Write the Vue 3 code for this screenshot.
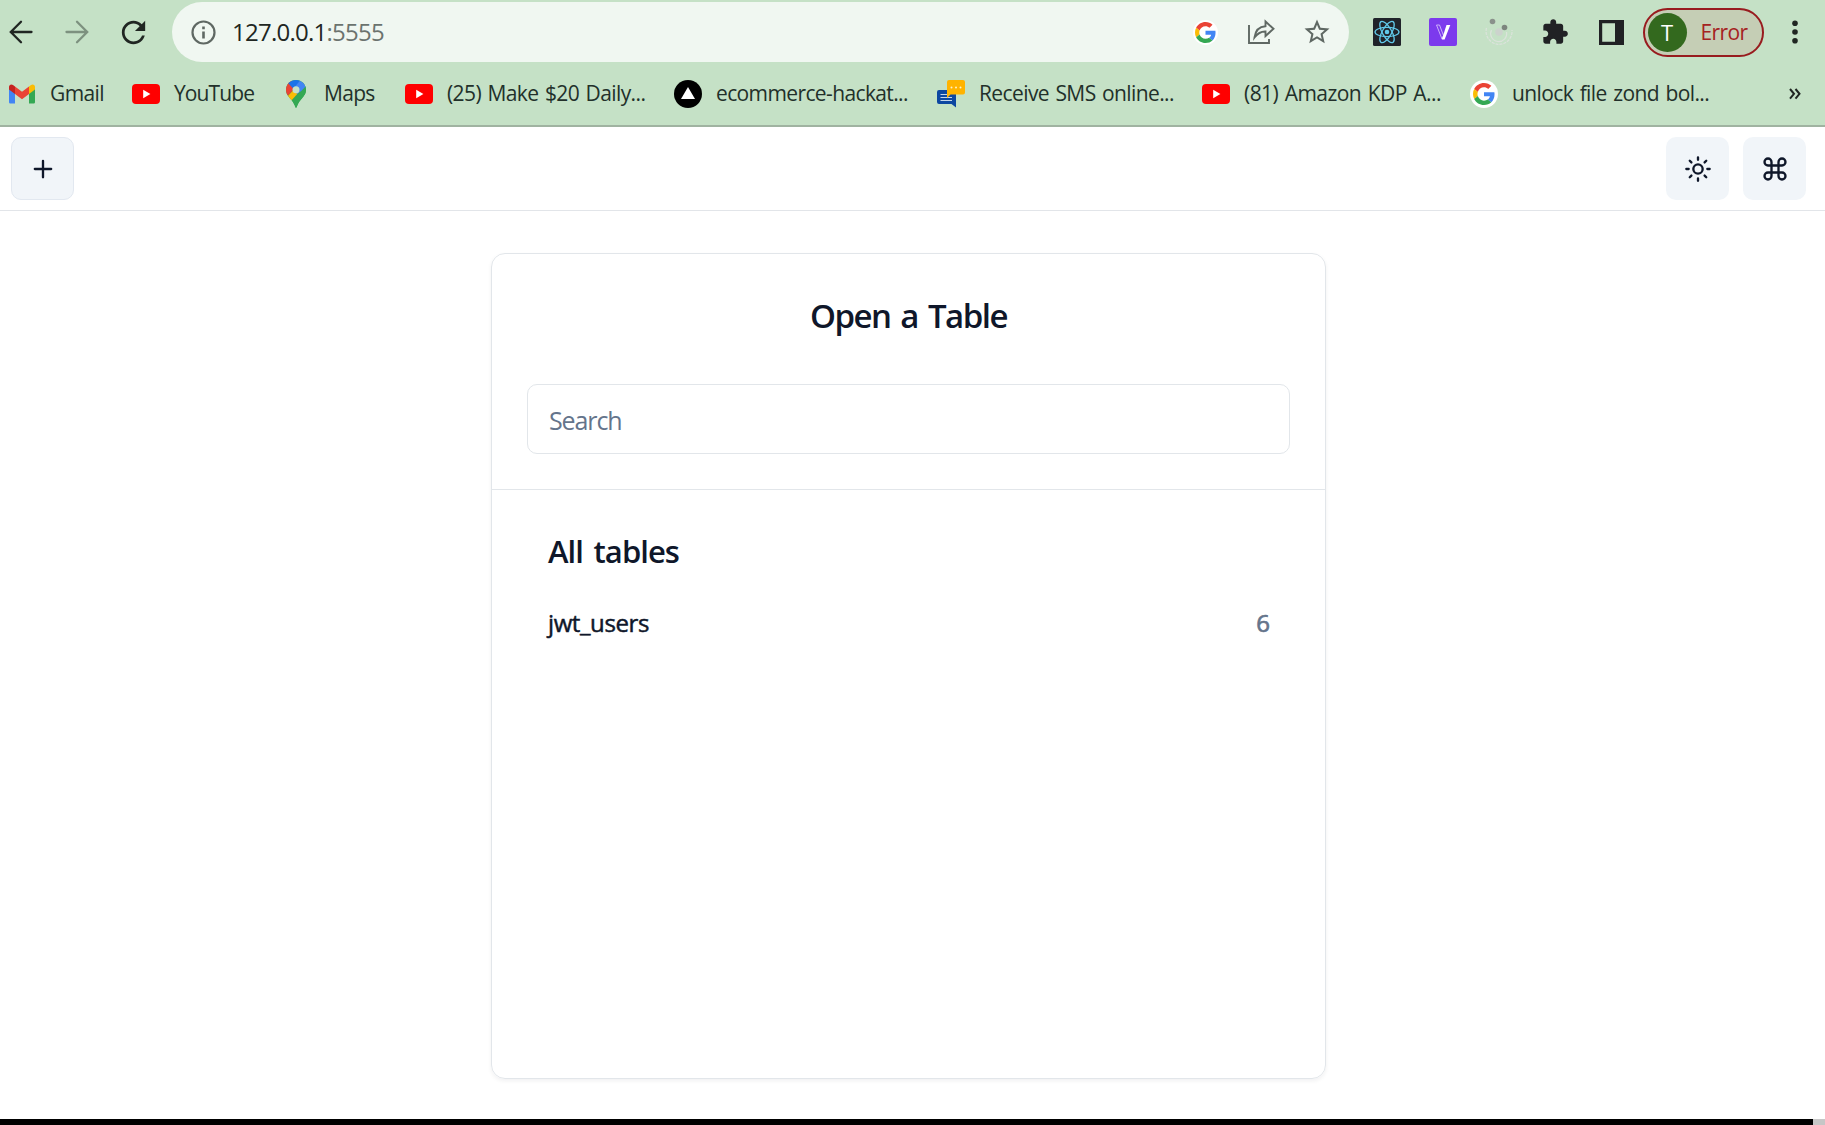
<script setup>
const bookmarks = [
  { icon: 'gmail', label: 'Gmail', spacing: -0.6 },
  { icon: 'youtube', label: 'YouTube', spacing: -0.9 },
  { icon: 'maps', label: 'Maps', spacing: -0.7 },
  { icon: 'youtube', label: '(25) Make $20 Daily...', spacing: -0.6 },
  { icon: 'vercel', label: 'ecommerce-hackat...', spacing: -0.62 },
  { icon: 'sms', label: 'Receive SMS online...', spacing: -0.6 },
  { icon: 'youtube', label: '(81) Amazon KDP A...', spacing: -0.55 },
  { icon: 'google', label: 'unlock file zond bol...', spacing: -0.6 },
]
const tables = [{ name: 'jwt_users', count: 6 }]
</script>

<template>
  <div class="screen">
    <svg class="defs" width="0" height="0">
      <symbol id="google" viewBox="0 0 48 48">
        <path fill="#EA4335" d="M24 9.5c3.54 0 6.71 1.22 9.21 3.6l6.85-6.85C35.9 2.38 30.47 0 24 0 14.62 0 6.51 5.38 2.56 13.22l7.98 6.19C12.43 13.72 17.74 9.5 24 9.5z" />
        <path fill="#4285F4" d="M46.98 24.55c0-1.57-.15-3.09-.38-4.55H24v9.02h12.94c-.58 2.96-2.26 5.48-4.78 7.18l7.73 6c4.51-4.18 7.09-10.36 7.09-17.65z" />
        <path fill="#FBBC05" d="M10.53 28.59c-.48-1.45-.76-2.99-.76-4.59s.27-3.14.76-4.59l-7.98-6.19C.92 16.46 0 20.12 0 24s.92 7.54 2.56 10.78l7.97-6.19z" />
        <path fill="#34A853" d="M24 48c6.48 0 11.93-2.13 15.89-5.81l-7.73-6c-2.15 1.45-4.92 2.3-8.16 2.3-6.26 0-11.57-4.22-13.47-9.91l-7.98 6.19C6.51 42.62 14.62 48 24 48z" />
      </symbol>
    </svg>

    <header class="chrome">
      <div class="toolbar">
        <div class="nav">
          <span class="slot">
            <svg width="24" height="24" viewBox="0 0 24 24" fill="none" stroke="#202622" stroke-width="2.3" stroke-linecap="round"><path d="M22.5 12H2M12 1.800L1.800 12L12 22.200" /></svg>
          </span>
          <span class="slot">
            <svg width="24" height="24" viewBox="0 0 24 24" fill="none" stroke="#7d917f" stroke-width="2.3" stroke-linecap="round"><path d="M1.500 12H22M12 1.800L22.200 12L12 22.200" /></svg>
          </span>
          <span class="slot">
            <svg width="35" height="35" viewBox="0 0 24 24" fill="#202622"><path d="M17.65 6.35C16.2 4.9 14.21 4 12 4c-4.42 0-7.99 3.58-7.99 8s3.57 8 7.99 8c3.73 0 6.84-2.55 7.73-6h-1.9c-.82 2.33-3.04 4.1-5.83 4.1-3.31 0-6.1-2.79-6.1-6.1s2.79-6.1 6.1-6.1c1.66 0 3.14.69 4.22 1.78L13 11h7V4l-2.35 2.35z" /></svg>
          </span>
        </div>
        <div class="address">
          <svg class="info" width="25" height="25" viewBox="0 0 25 25" fill="none" stroke="#5f6863" stroke-width="2.2"><circle cx="12.500" cy="12.500" r="11" /><path d="M12.500 11.500V18.500M12.500 6.500V9.300" stroke-width="2.600" /></svg>
          <div class="url">127.0.0.1<span>:5555</span></div>
          <div class="actions">
            <span class="slot"><i class="disc small"><svg width="21" height="21"><use href="#google" /></svg></i></span>
            <span class="slot">
              <svg width="28" height="28" viewBox="0 0 28 28" fill="none" stroke="#5f6863" stroke-width="1.900"><path d="M2 7V25H22V21" /><path d="M7.500 19.500C8.500 12 12.500 8.500 18.500 8.200V3.500L26.500 10.800L18.500 18V13.500C13.500 13.300 10.500 15.500 7.500 19.500Z" /></svg>
            </span>
            <span class="slot">
              <svg width="30" height="30" viewBox="0 0 24 24" fill="#5f6863"><path d="M22 9.240l-7.190-.62L12 2 9.190 8.630 2 9.240l5.460 4.730L5.820 21 12 17.270 18.180 21l-1.630-7.030L22 9.240zM12 15.400l-3.760 2.270 1-4.280-3.320-2.880 4.380-.38L12 6.100l1.710 4.040 4.380.38-3.320 2.880 1 4.280L12 15.400z" /></svg>
            </span>
          </div>
        </div>
        <div class="extensions">
          <span class="slot">
            <svg width="28" height="28" viewBox="0 0 28 28"><rect width="28" height="28" rx="1.500" fill="#20232a" /><g fill="none" stroke="#61c9ea" stroke-width="1.300"><ellipse cx="14" cy="14" rx="12" ry="4.600" /><ellipse cx="14" cy="14" rx="12" ry="4.600" transform="rotate(60 14 14)" /><ellipse cx="14" cy="14" rx="12" ry="4.600" transform="rotate(120 14 14)" /></g><circle cx="14" cy="14" r="2.300" fill="#61c9ea" /></svg>
          </span>
          <span class="slot">
            <svg width="28" height="28" viewBox="0 0 28 28"><rect width="28" height="28" rx="2" fill="#7c3aed" /><path fill="none" stroke="#d3bdfa" stroke-width=".9" d="M7.500 7H10.500L14.500 17.500L13 21Z" /><path d="M17.500 7H21.300L15.600 21.500H12.800Z" fill="#fff" /></svg>
          </span>
          <span class="slot">
            <svg width="30" height="30" viewBox="0 0 30 30" fill="none"><g stroke="#dbe3db" stroke-width="1.200"><path d="M2.500 11A13 13 0 1 0 28 13" stroke-dasharray="3 1" /><path d="M7.500 13A8 8 0 1 0 22.500 15" /></g><circle cx="15" cy="15" r="3.800" fill="#ccd3cd" /><circle cx="8.500" cy="4.500" r="2.800" fill="#8a918b" /><circle cx="20.500" cy="10.500" r="2.800" fill="#7d857e" /></svg>
          </span>
          <span class="slot">
            <svg width="28" height="28" viewBox="0 0 24 24" fill="#202124"><path d="M20.500 11H19V7c0-1.100-.9-2-2-2h-4V3.500C13 2.120 11.880 1 10.500 1S8 2.120 8 3.500V5H4c-1.100 0-1.990.9-1.990 2v3.800H3.500c1.490 0 2.700 1.210 2.700 2.700s-1.210 2.700-2.700 2.700H2V20c0 1.100.9 2 2 2h3.800v-1.500c0-1.490 1.210-2.700 2.700-2.700 1.490 0 2.700 1.210 2.700 2.700V22H17c1.100 0 2-.9 2-2v-4h1.500c1.380 0 2.500-1.120 2.500-2.500S21.880 11 20.500 11z" /></svg>
          </span>
          <span class="slot">
            <svg width="25" height="25" viewBox="0 0 25 25"><path fill="#202124" fill-rule="evenodd" d="M0 0H25V25H0ZM3.200 3.200V21.800H16V3.200Z" /></svg>
          </span>
        </div>
        <div class="profile"><span class="avatar">T</span><span class="error">Error</span></div>
        <svg class="menu" width="6" height="24" viewBox="0 0 6 24" fill="#202622"><circle cx="3" cy="3.200" r="2.800" /><circle cx="3" cy="12" r="2.800" /><circle cx="3" cy="20.800" r="2.800" /></svg>
      </div>

      <nav class="bookmarks">
        <div v-for="b in bookmarks" :key="b.label" class="bookmark">
          <span class="favicon">
            <svg v-if="b.icon === 'gmail'" width="26" height="20" viewBox="0 0 26 20"><path fill="#4285f4" d="M0 3V18C0 19 .7 19.600 1.600 19.600H6V8.500Z" /><path fill="#34a853" d="M26 3V18C26 19 25.300 19.600 24.400 19.600H20V8.500Z" /><path fill="#fbbc04" d="M20 2.500L22 1C24 -.3 26 1 26 3V5.500L20 10Z" /><path fill="#c5221f" d="M6 2.500L4 1C2 -.3 0 1 0 3V5.500L6 10Z" /><path fill="#ea4335" d="M6 2.500L13 7.700L20 2.500V10L13 15.200L6 10Z" /></svg>
            <svg v-else-if="b.icon === 'youtube'" width="28" height="20" viewBox="0 0 28 20"><rect width="28" height="20" rx="4" fill="#f00" /><path fill="#fff" d="M11.200 5.700V14.300L18.400 10Z" /></svg>
            <svg v-else-if="b.icon === 'maps'" width="20" height="28" viewBox="0 0 20 28"><clipPath id="pin"><path d="M10 0C4.300 0 0 4.300 0 9.700C0 14 2.500 16.300 5 19.500C7.500 22.500 8.500 24.500 9.200 27C9.500 28.200 10.500 28.200 10.800 27C11.500 24.500 12.500 22.500 15 19.500C17.500 16.300 20 14 20 9.700C20 4.300 15.700 0 10 0Z" /></clipPath><g clip-path="url(#pin)"><path fill="#34a853" d="M0 0H20V28H0Z" /><path fill="#fbbc04" d="M0 18L13 4L14 11L4 22L0 20Z" /><path fill="#ea4335" d="M0 0H6L9 8L1.500 16L0 14Z" /><path fill="#1a73e8" d="M2 3L8 9.500L14 1V0H4Z" /><path fill="#4285f4" d="M7.500 8.500L14.500 0L20 5V8L11 14Z" /><path fill="#34a853" d="M20 6L5 22L12 28H20Z" /></g><circle cx="10" cy="9.700" r="3.500" fill="#c5e1c6" /></svg>
            <svg v-else-if="b.icon === 'vercel'" width="28" height="28" viewBox="0 0 28 28"><circle cx="14" cy="14" r="14" /><path fill="#fff" d="M14 7L21 19H7Z" /></svg>
            <svg v-else-if="b.icon === 'sms'" width="28" height="28" viewBox="0 0 28 28"><path fill="#0d47a1" d="M2 10H19V27.500L14.500 24H2Q0 24 0 22V12Q0 10 2 10Z" /><path d="M3.500 14.500H11M3.500 17.500H15M3.500 20.500H15" stroke="#c5d4ea" stroke-width="1.100" /><path fill="#ffb300" d="M12 0H26Q28 0 28 2V12.500Q28 14.500 26 14.500H13.500L10 18V2Q10 0 12 0Z" /><g fill="#fff0c8"><circle cx="14.500" cy="7.500" r="1" /><circle cx="19" cy="7.500" r="1" /><circle cx="23.500" cy="7.500" r="1" /></g></svg>
            <i v-else class="disc"><svg width="22" height="22"><use href="#google" /></svg></i>
          </span>
          <span class="label" :style="{ letterSpacing: b.spacing + 'px' }">{{ b.label }}</span>
        </div>
        <svg class="more" width="12" height="12" viewBox="0 0 12 12" fill="none" stroke="#202622" stroke-width="2"><path d="M1 1L5 5.800L1 10.600M6.500 1L10.500 5.800L6.500 10.600" /></svg>
      </nav>
    </header>

    <div class="tabs">
      <button class="tool outlined">
        <svg width="28" height="28" viewBox="0 0 24 24"><path d="M5 12h14M12 5v14" /></svg>
      </button>
      <div class="tools">
        <button class="tool">
          <svg width="28" height="28" viewBox="0 0 24 24"><circle cx="12" cy="12" r="4" /><path d="M12 2v2M12 20v2M4.930 4.930l1.410 1.410M17.660 17.660l1.410 1.410M2 12h2M20 12h2M6.340 17.660l-1.410 1.410M19.070 4.930l-1.410 1.410" /></svg>
        </button>
        <button class="tool">
          <svg width="28" height="28" viewBox="0 0 24 24"><path d="M18 3a3 3 0 0 0-3 3v12a3 3 0 0 0 3 3 3 3 0 0 0 3-3 3 3 0 0 0-3-3H6a3 3 0 0 0-3 3 3 3 0 0 0 3 3 3 3 0 0 0 3-3V6a3 3 0 0 0-3-3 3 3 0 0 0-3 3 3 3 0 0 0 3 3h12a3 3 0 0 0 3-3 3 3 0 0 0-3-3z" /></svg>
        </button>
      </div>
    </div>

    <main class="content">
      <section class="card">
        <div class="card-head">
          <h1>Open a Table</h1>
          <input type="text" placeholder="Search" />
        </div>
        <div class="card-body">
          <h2>All tables</h2>
          <div v-for="t in tables" :key="t.name" class="table-row">
            <span class="name">{{ t.name }}</span><span class="count">{{ t.count }}</span>
          </div>
        </div>
      </section>
    </main>
    <footer class="edge"><span></span></footer>
  </div>
</template>

<style>
body { margin: 0; background: #fff; overflow: hidden; }
</style>

<style scoped>
* { box-sizing: border-box; }
.screen { width: 1825px; height: 1125px; display: flex; flex-direction: column; overflow: hidden; background: #fff; color: #0f172a; font-family: "Open Sans", "Noto Sans", sans-serif; }
.defs { position: absolute; }
svg { display: block; flex: none; }
.chrome { height: 127px; flex: none; background: #c5e1c6; border-bottom: 2px solid #a0b3a1; }
.toolbar { height: 64px; display: flex; align-items: center; }
.nav { display: flex; margin-left: -7px; width: 179px; flex: none; }
.slot { width: 56px; display: flex; align-items: center; justify-content: center; flex: none; }
.address { width: 1177px; height: 60px; flex: none; border-radius: 30px; background: #f0f7f1; display: flex; align-items: center; padding-left: 19px; }
.url { margin-left: 16px; flex: 1; font-size: 24px; line-height: 34px; letter-spacing: -0.75px; color: #202622; }
.url span { color: #6b736e; }
.actions { display: flex; margin-right: 4px; }
.disc { width: 28px; height: 28px; border-radius: 50%; background: #fff; display: flex; align-items: center; justify-content: center; }
.disc.small { width: 25px; height: 25px; }
.extensions { display: flex; margin-left: 10px; }
.profile { width: 121px; height: 49px; margin-left: 3.5px; flex: none; border: 2px solid #981b1e; border-radius: 25px; background: #c5ceb5; display: flex; align-items: center; padding-left: 3px; }
.avatar { width: 39px; height: 39px; border-radius: 50%; background: #33691e; color: #fff; font-size: 22px; line-height: 39px; text-align: center; }
.error { margin-left: 14px; font-size: 21px; letter-spacing: -0.6px; color: #a52222; }
.menu { margin-left: 28px; }
.bookmarks { height: 60px; display: grid; align-items: center; padding-left: 8px; grid-template-columns: 124px 150px 123px 269px 263px 265px 268px 319px auto; }
.bookmark { display: flex; align-items: center; }
.favicon { width: 28px; height: 28px; display: flex; align-items: center; justify-content: center; flex: none; }
.label { margin: -2px 0 0 14px; font-size: 21px; line-height: 30px; white-space: nowrap; word-spacing: 1.6px; color: #22302a; }
.tabs { height: 84px; flex: none; border-bottom: 1px solid #e2e5e9; display: flex; align-items: center; justify-content: space-between; padding: 0 19px 0 11px; }
.tools { display: flex; gap: 14px; }
.tool { width: 63px; height: 63px; padding: 0; border: 0; border-radius: 10px; background: #f1f5f9; display: flex; align-items: center; justify-content: center; }
.tool.outlined { border: 1px solid #e2e8f0; }
.tool svg { fill: none; stroke: #0f172a; stroke-width: 2; stroke-linecap: round; stroke-linejoin: round; }
.content { flex: 1; padding: 42px 0 0 491px; }
.card { width: 835px; height: 826px; border: 1px solid #e2e6ea; border-radius: 14px; box-shadow: 0 2px 4px rgba(15, 23, 42, 0.06); }
.card-head { height: 236px; padding: 40px 35px 0; border-bottom: 1px solid #e2e6ea; }
h1 { margin: 0; font-size: 33px; line-height: 44px; font-weight: 600; letter-spacing: -1.480px; word-spacing: 2.8px; text-align: center; }
input { display: block; width: 763px; height: 70px; margin-top: 46px; padding: 1px 20px 0 21px; border: 1px solid #e2e6ea; border-radius: 10px; background: #fff; font: 400 25px "Open Sans", sans-serif; letter-spacing: -1.1px; outline: none; }
input::placeholder { color: #64748b; opacity: 1; }
.card-body { padding: 39px 55px 0 56px; }
h2 { margin: 0; font-size: 31px; line-height: 44px; font-weight: 600; letter-spacing: -0.950px; word-spacing: 3.500px; }
.table-row { height: 67px; display: flex; align-items: flex-end; justify-content: space-between; font-size: 24px; line-height: 34px; }
.name { letter-spacing: -0.400px; -webkit-text-stroke: 0.5px #0f172a; }
.count { color: #64748b; -webkit-text-stroke: 0.7px #64748b; }
.edge { height: 6px; flex: none; background: #c6c6c6; }
.edge span { display: block; width: 1813px; height: 6px; background: #000; }
</style>
